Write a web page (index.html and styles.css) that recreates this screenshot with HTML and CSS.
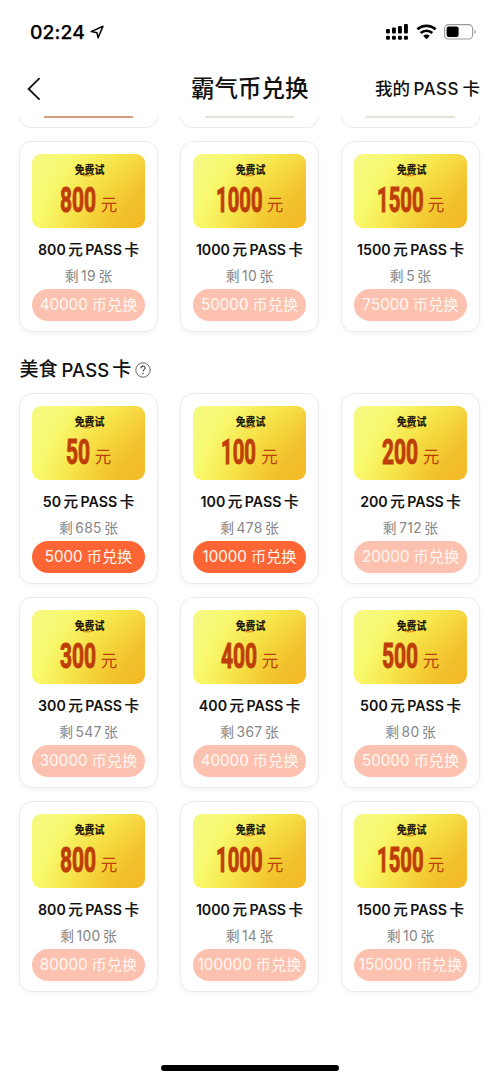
FILE: index.html
```html
<!DOCTYPE html>
<html lang="zh-CN">
<head>
<meta charset="utf-8">
<title>霸气币兑换</title>
<link rel="stylesheet" href="styles.css">
</head>
<body>
<div class="screen">
  <div class="status">
    <span class="time">02:24</span>
    <svg class="locate" width="15" height="15" viewBox="0 0 15 15"><path d="M1.2 6.6 13 1.2 8 12.9 7 7.7Z" fill="none" stroke="#000" stroke-width="1.5" stroke-linejoin="round"/></svg>
    <svg class="signal" width="23" height="18" viewBox="0 0 23 18">
      <rect x="0" y="6" width="3.9" height="4.5" rx="1"/><rect x="6" y="4.5" width="3.9" height="6" rx="1"/><rect x="12" y="3" width="3.9" height="7.5" rx="1"/><rect x="18" y="1" width="3.9" height="9.5" rx="1"/>
      <rect x="0" y="12.8" width="3.9" height="4" rx="1.2"/><rect x="6" y="12.8" width="3.9" height="4" rx="1.2"/><rect x="12" y="12.8" width="3.9" height="4" rx="1.2"/><rect x="18" y="12.8" width="3.9" height="4" rx="1.2"/>
    </svg>
    <svg class="wifi" width="21" height="16" viewBox="0 0 21 16"><path d="M1.4 5.3C6.5.6 14.5.6 19.6 5.3M4.7 9C8 6 13 6 16.3 9" fill="none" stroke="#000" stroke-width="2.7"/><path d="M7.2 11.8Q10.5 9.2 13.8 11.8L10.5 15.3Z"/></svg>
    <svg class="battery" width="33" height="16" viewBox="0 0 33 16"><rect x=".6" y=".6" width="28" height="14.4" rx="4" fill="none" stroke="#999" stroke-width="1.1"/><rect x="2.6" y="2.6" width="12" height="10.4" rx="2"/><path d="M30.5 5.2Q33 7.8 30.5 10.4Z" fill="#999"/></svg>
  </div>
  <div class="nav">
    <svg class="back" width="14" height="24" viewBox="0 0 14 24"><path d="M12.6 1.2 1.6 12 12.6 22.6" fill="none" stroke="#111" stroke-width="1.8"/></svg>
    <span class="page-title">霸气币兑换</span>
    <span class="mine"><span>我的</span><span class="en">PASS</span><span>卡</span></span>
  </div>
  <div class="peek">
    <div class="stub stub-active"></div><div class="stub"></div><div class="stub"></div>
  </div>
  <div class="grid" id="first"></div>
  <div class="section-title"><span>美食</span><span class="en">PASS</span><span>卡</span><svg width="16" height="16" viewBox="0 0 16 16"><circle cx="8" cy="8" r="7.2" fill="none" stroke="#555" stroke-width=".9"/><path d="M5.9 6.2C6 3.3 10.2 3.5 10.1 6 10 7.5 8 7.8 8 9.5" fill="none" stroke="#444" stroke-width="1.1"/><circle cx="8" cy="11.5" r=".8" fill="#444"/></svg></div>
  <div class="grid" id="food"></div>
  <div class="home"></div>
</div>
<script src="cards.js"></script>
</body>
</html>
```
FILE: styles.css
```css
* { box-sizing: border-box; }
body { margin: 0; background: #fff; }
.screen {
  width: 500px; height: 1082px; overflow: hidden; background: #fff; color: #111;
  font-family: Inter, "Noto Sans CJK SC", sans-serif;
  display: flex; flex-direction: column;
}
.screen span { white-space: nowrap; }
.status { height: 62px; flex: none; display: flex; align-items: center; padding: 2px 23px 0 30px; }
.time { font-size: 19.3px; font-weight: 500; letter-spacing: .1px; color: #000; -webkit-text-stroke: .25px #000; }
.locate { margin-left: 5px; }
.signal { margin-left: auto; }
.wifi { margin-left: 7px; }
.battery { margin-left: 7px; }
.nav { height: 54px; flex: none; display: grid; grid-template-columns: 164px auto 1fr; align-items: center; padding: 0 20px 0 27px; }
.page-title { font-size: 23.5px; font-weight: 500; line-height: 34px; }
.mine { display: flex; justify-content: flex-end; align-items: center; gap: 3.5px; font-size: 17.5px; font-weight: 500; line-height: 26px; }
.mine .en { font-size: 17px; letter-spacing: .5px; }
.peek { height: 12px; flex: none; overflow: hidden; display: grid; grid-template-columns: repeat(3, 139px); gap: 22px; padding-left: 19px; }
.stub { height: 12px; border: 1px solid #ececee; border-top: 0; border-radius: 0 0 13px 13px; padding: 0 24px; }
.stub::before { content: ""; display: block; height: 1.5px; background: #eadfd8; }
.stub-active::before { background: #d69b80; }
.grid { flex: none; display: grid; grid-template-columns: repeat(3, 139px); column-gap: 22px; row-gap: 13px; padding-left: 19px; }
#first { margin-top: 13px; }
.card {
  height: 191px; border: 1px solid #ececee; border-radius: 13px; background: #fff;
  box-shadow: 0 2px 5px rgba(0, 0, 0, .045);
  display: flex; flex-direction: column; align-items: center; padding-top: 12px;
}
.cover {
  width: 113px; height: 74px; flex: none; border-radius: 9px; color: #b84109;
  background:
    radial-gradient(ellipse 65px 75px at 67% 78%, rgba(239, 181, 22, .35), rgba(239, 181, 22, 0)),
    linear-gradient(125deg, #f5f982 0%, #f8fa70 28%, #f8ee55 50%, #f6da44 66%, #f3c233 82%, #f4ba27 100%);
  display: flex; flex-direction: column; align-items: center;
}
.brand { display: block; height: 18px; flex: none; margin-top: 7px; }
.brand text { font: 700 11px "Noto Sans CJK SC", sans-serif; fill: #17130a; stroke: #17130a; stroke-width: .2px; }
.amount { display: flex; align-items: flex-end; gap: 4px; }
.amount svg { display: block; }
.amount text { font: 700 35px Roboto, sans-serif; fill: #be3d08; stroke: #be3d08; stroke-width: 1px; }
.unit { font-size: 16.5px; line-height: 24px; margin-bottom: 4px; }
.name { display: flex; gap: 2.5px; margin-top: 12px; font-size: 14.2px; line-height: 20px; font-weight: 600; flex: none; }
.name .han { font-weight: 500; font-size: 14.5px; -webkit-text-stroke: .2px #111; }
.left { display: flex; gap: 2.5px; margin-top: 6px; font-size: 13.8px; line-height: 20px; color: #858585; flex: none; }
.left .num { letter-spacing: .3px; }
.button {
  width: 113px; height: 32px; flex: none; margin-top: 3px; border-radius: 16px; background: #fdc2af; color: #fff8f3;
  display: flex; justify-content: center; align-items: center; gap: 4px; font-size: 15.2px; line-height: 20px;
}
.button.on { background: #fd6634; }
.section-title { flex: none; height: 61px; padding: 24px 0 0 19.5px; display: flex; align-items: flex-start; font-size: 19px; line-height: 28px; font-weight: 500; }
.section-title .en { margin: 0 3px 0 4px; font-size: 18.5px; letter-spacing: .1px; }
.section-title svg { margin: 6px 0 0 4px; }
.home { width: 178px; height: 6px; border-radius: 3px; background: #000; margin: auto auto 11px 161px; }
```
FILE: cards.js
```js
const first = [[800, 19, 40000], [1000, 10, 50000], [1500, 5, 75000]];
const food = [
  [50, 685, 5000, true], [100, 478, 10000, true], [200, 712, 20000],
  [300, 547, 30000], [400, 367, 40000], [500, 80, 50000],
  [800, 100, 80000], [1000, 14, 100000], [1500, 10, 150000],
];

function card([value, left, price, on]) {
  const digits = String(value);
  const scale = digits[0] === '1' ? 0.58 : 0.6;
  const w = Math.ceil(digits.length * 20.15 * scale);
  return `<div class="card">
    <div class="cover">
      <svg class="brand" width="34" height="18" viewBox="0 0 34 18">
        <path d="M10 13.6Q16 16.4 21 13.4" fill="none" stroke="#ee8a20" stroke-width="1.2"/>
        <text x="3" y="13" transform="scale(.9 1)">免费试</text>
      </svg>
      <div class="amount">
        <svg width="${w}" height="42" viewBox="0 0 ${w} 42"><text x="0" y="33" transform="scale(${scale} 1)">${digits}</text></svg>
        <span class="unit">元</span>
      </div>
    </div>
    <div class="name"><span>${value}</span><span class="han">元</span><span>PASS</span><span class="han">卡</span></div>
    <div class="left"><span>剩</span><span class="num">${left}</span><span>张</span></div>
    <div class="button${on ? ' on' : ''}"><span>${price}</span><span>币兑换</span></div>
  </div>`;
}

document.getElementById('first').innerHTML = first.map(card).join('');
document.getElementById('food').innerHTML = food.map(card).join('');
```
